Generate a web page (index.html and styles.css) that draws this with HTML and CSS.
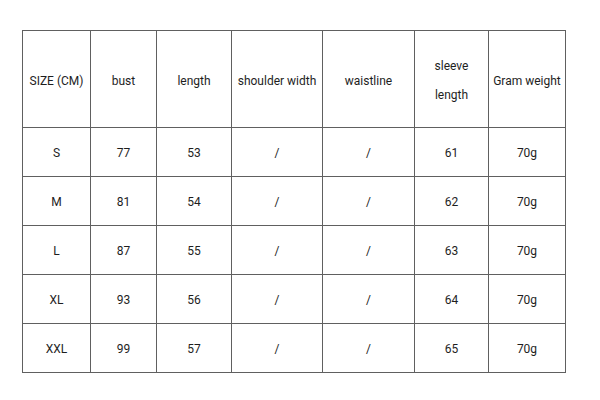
FILE: index.html
```html
<!DOCTYPE html>
<html>
<head>
<meta charset="utf-8">
<link rel="stylesheet" href="styles.css">
</head>
<body>
<table class="size-table">
  <colgroup>
    <col class="c1"><col class="c2"><col class="c3"><col class="c4"><col class="c5"><col class="c6"><col class="c7">
  </colgroup>
  <thead>
    <tr class="head">
      <th>SIZE (CM)</th>
      <th>bust</th>
      <th>length</th>
      <th>shoulder width</th>
      <th>waistline</th>
      <th><span class="two">sleeve<br>length</span></th>
      <th>Gram weight</th>
    </tr>
  </thead>
  <tbody>
    <tr><td>S</td><td>77</td><td>53</td><td>/</td><td>/</td><td>61</td><td>70g</td></tr>
    <tr><td>M</td><td>81</td><td>54</td><td>/</td><td>/</td><td>62</td><td>70g</td></tr>
    <tr><td>L</td><td>87</td><td>55</td><td>/</td><td>/</td><td>63</td><td>70g</td></tr>
    <tr><td>XL</td><td>93</td><td>56</td><td>/</td><td>/</td><td>64</td><td>70g</td></tr>
    <tr><td>XXL</td><td>99</td><td>57</td><td>/</td><td>/</td><td>65</td><td>70g</td></tr>
  </tbody>
</table>
</body>
</html>
```
FILE: styles.css
```css
html, body {
  margin: 0;
  padding: 0;
  background: #fff;
}
body {
  padding: 30px 0 0 22px;
  font-family: Roboto, "Open Sans", sans-serif;
  font-size: 12px;
  color: #1e1e1e;
}
.size-table {
  border-collapse: collapse;
  table-layout: fixed;
  width: 543px;
}
.c1 { width: 68px; }
.c2 { width: 66px; }
.c3 { width: 75px; }
.c4 { width: 91px; }
.c5 { width: 92px; }
.c6 { width: 74px; }
.c7 { width: 77px; }
.size-table th,
.size-table td {
  border: 1px solid #606060;
  text-align: center;
  vertical-align: middle;
  padding: 2px 0 0;
  font-weight: normal;
}
.head th {
  height: 93px;
  padding-top: 3px;
}
.size-table td {
  height: 46px;
}
.two {
  display: inline-block;
  line-height: 29px;
}
```
